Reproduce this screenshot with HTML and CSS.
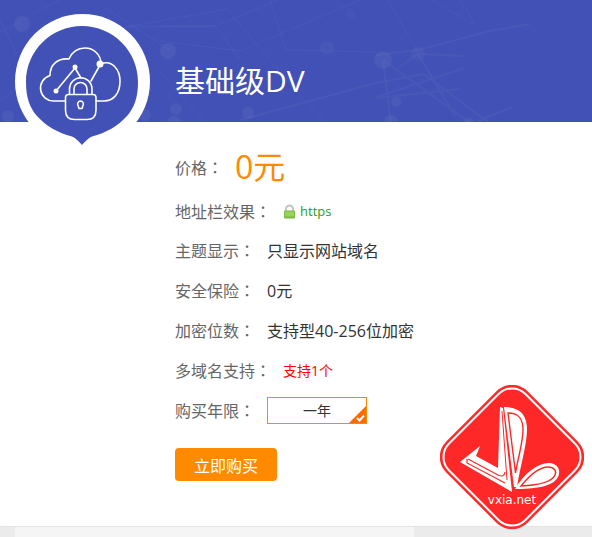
FILE: index.html
```
<!doctype html>
<html lang="zh-CN">
<head>
  <meta charset="utf-8">
  <meta name="viewport" content="width=device-width, initial-scale=1">
  <title>基础级DV</title>
  <link rel="stylesheet" href="styles.css">
</head>
<body>

  <header class="banner">
    <svg class="banner-net" width="592" height="122" viewBox="0 0 592 122" aria-hidden="true">
      <g fill="none" stroke="#fff" stroke-opacity=".04">
        <path d="M0 32L60 0M105 8L170 50M120 28L227 9L285 78L325 122M160 26L216 26L290 -5M125 27L216 26L240 60M160 41L240 51L360 0M270 0L286 50L376 52M0 100L60 60M0 20L50 122M160 72L205 122M388 0L418 52M432 0L475 25M460 0L475 24"/>
        <path d="M376 55L418 50L490 31L530 24M418 54L465 56M376 83L424 74L488 122M376 97L465 68M376 98L460 89M418 54L398 68M418 54L455 116M383 60L469 122M383 60L391 122M476 122L512 107M240 120L376 83" stroke-width="2"/>
      </g>
      <g fill="#fff" fill-opacity=".05">
        <circle cx="22" cy="24" r="8"/>
        <circle cx="168" cy="51" r="8"/>
        <circle cx="8" cy="116" r="6"/>
        <circle cx="145" cy="115" r="6"/>
        <circle cx="176" cy="109" r="6"/>
        <circle cx="174" cy="123" r="7"/>
        <circle cx="248" cy="113" r="6"/>
        <circle cx="327" cy="48" r="7" fill-opacity=".03"/>
        <circle cx="351" cy="14" r="5" fill-opacity=".02"/>
        <circle cx="383" cy="60" r="9"/>
        <circle cx="418" cy="54" r="7" fill-opacity=".03"/>
        <circle cx="396" cy="102" r="5"/>
        <circle cx="391" cy="122" r="7"/>
        <circle cx="469" cy="124" r="6"/>
      </g>
    </svg>
    <svg class="badge" width="135" height="135" viewBox="0 0 135 135" aria-hidden="true">
      <circle cx="67.5" cy="67.5" r="67.5" fill="#fff"/>
      <path d="M67 12C98 12 123 37 123 68C123 84 119 94 112 102C103 112 91 119 77 122.500C73 124 70 128 67 131C64 128 61 124 57 122.500C43 119 31 112 22 102C15 94 11 84 11 68C11 37 36 12 67 12Z" fill="#4251b5"/>
      <g fill="none" stroke="#fff" stroke-width="1.600" stroke-linejoin="round" stroke-linecap="round">
        <path d="M50 87H39A13 13 0 0 1 35 61.500C35 50 43 44 54 45C57 38 63 34 70 34C78 34 86 40 86 50C97 45 105 56 105 67C105 80 98 87 89 87H81"/>
        <path d="M41 77L60 54L66 64M76 67L85 51"/>
        <path d="M54.500 80V75A11 11 0 0 1 77 75V80M59 80V75A6.500 6.500 0 0 1 72 75V80"/>
        <path d="M53.500 80.500H78Q81 80.500 81 83.500V96Q81 105.500 72 105.500H59.500Q50.500 105.500 50.500 96V83.500Q50.500 80.500 53.500 80.500Z"/>
        <path d="M65.500 87A3 3 0 0 1 68 91.500L67 94.500H64L63 91.500A3 3 0 0 1 65.500 87Z" stroke-width="1.500"/>
      </g>
      <g fill="#fff">
        <circle cx="41" cy="77" r="2.500"/>
        <circle cx="60" cy="53" r="2.500"/>
        <circle cx="85" cy="50" r="3.500"/>
      </g>
    </svg>
    <h1 class="title">基础级DV</h1>
  </header>

  <main class="detail">
    <dl class="specs">
      <div class="row row-price">
        <dt>价格<span class="colon" lang="zh-TW">：</span></dt>
        <dd class="price">0元</dd>
      </div>
      <div class="row row-bar">
        <dt>地址栏效果<span class="colon" lang="zh-TW">：</span></dt>
        <dd class="https">
          <svg width="13" height="15" viewBox="0 0 13 15" aria-hidden="true">
            <path d="M3 8V5A3.500 3.500 0 0 1 10 5V8" fill="none" stroke="#c4c4c4" stroke-width="2"/>
            <rect x="1" y="6.500" width="11" height="8" rx="1" fill="#7cb845"/>
            <rect x="2" y="7.500" width="9" height="5" fill="#97d457"/>
          </svg>
          <span>https</span>
        </dd>
      </div>
      <div class="row">
        <dt>主题显示<span class="colon" lang="zh-TW">：</span></dt>
        <dd>只显示网站域名</dd>
      </div>
      <div class="row">
        <dt>安全保险<span class="colon" lang="zh-TW">：</span></dt>
        <dd>0元</dd>
      </div>
      <div class="row">
        <dt>加密位数<span class="colon" lang="zh-TW">：</span></dt>
        <dd>支持型40-256位加密</dd>
      </div>
      <div class="row">
        <dt>多域名支持<span class="colon" lang="zh-TW">：</span></dt>
        <dd class="red">支持1个</dd>
      </div>
      <div class="row">
        <dt>购买年限<span class="colon" lang="zh-TW">：</span></dt>
        <dd>
          <label class="year">
            <input type="radio" name="year" value="1" checked>
            <span>一年</span>
            <svg class="tick" width="17" height="17" viewBox="0 0 17 17" aria-hidden="true">
              <path d="M17 0V17H0Z" fill="#ff6a00"/>
              <path d="M8 12L10.500 14.500L15 9.500" fill="none" stroke="#fff" stroke-width="2"/>
            </svg>
          </label>
        </dd>
      </div>
    </dl>
    <button type="button" class="buy">立即购买</button>
  </main>

  <div class="tabs">
    <div class="tabs-inner"></div>
  </div>

  <svg class="stamp" width="144" height="144" viewBox="0 0 144 144" role="img" aria-label="vxia.net">
    <g transform="rotate(45 72 72)">
      <rect x="14.500" y="14.500" width="115" height="115" rx="22" fill="#ff2828"/>
      <rect x="18" y="18" width="108" height="108" rx="19" fill="none" stroke="#fff" stroke-width="2"/>
    </g>
    <path d="M60 22L63 23L72 107L20 77L40 61L36 71L58 83Z" fill="#fff"/>
    <path d="M62 26L67 95" fill="none" stroke="#ff2828"/>
    <path d="M28 74L58 90Q64 93 65 87M65 98L27 78V74" fill="none" stroke="#ff2828" stroke-width="1.200"/>
    <path d="M64 22C80 22 87 30 87 44C87 60 80 82 77 102H74Z" fill="#fff"/>
    <path d="M68 28C79 28 83 34 83 45C83 58 78 72 75.500 88Z" fill="#fff" stroke="#ff2828" stroke-width="1.400"/>
    <path d="M75 104C83 90 97 78 109 78C116 78 120 83 119 89C117 99 103 104 75 104Z" fill="#fff"/>
    <path d="M81 101C89 91 99 82 108 82C114 82 117 86 115 90C112 97 101 100 81 101Z" fill="#fff" stroke="#ff2828" stroke-width="1.400"/>
    <text class="stamp-text" x="72" y="119" text-anchor="middle">vxia.net</text>
  </svg>

</body>
</html>
```
FILE: styles.css
```
* {
  box-sizing: border-box;
}
body {
  margin: 0;
  background: #fff;
  color: #333;
  font-family: "Open Sans", "Noto Sans CJK SC", sans-serif;
  font-size: 16px;
}

/* banner */
.banner {
  position: relative;
  display: flex;
  gap: 25px;
  height: 122px;
  padding: 14px 15px 0;
  background: #4251b5;
}
.banner-net {
  position: absolute;
  top: 0;
  left: 0;
}
.badge {
  position: relative;
  flex: none;
}
.title {
  position: relative;
  margin: 0;
  padding-top: 43px;
  color: #fff;
  font-size: 30px;
  font-weight: 400;
  line-height: 48px;
}

/* details */
.detail {
  padding: 20px 15px 45px 175px;
}
.specs {
  margin: 0 0 18px;
}
.row {
  display: flex;
  align-items: center;
  gap: 12px;
  height: 40px;
}
.row-price {
  height: 50px;
}
.row-bar {
  height: 38px;
}
.row dt {
  color: #666;
}
.row dd {
  margin: 0;
}
.colon {
  font-family: "Noto Sans CJK TC", sans-serif;
}
.row .price {
  color: #ff8a00;
  font-size: 32px;
  font-weight: 400;
  line-height: 48px;
}
.https {
  display: flex;
  align-items: center;
  gap: 4px;
  color: #24a024;
  font-size: 13px;
}
.row .red {
  color: #f00;
  font-size: 14px;
}
.year {
  position: relative;
  display: flex;
  align-items: center;
  justify-content: center;
  width: 100px;
  height: 27px;
  border: 1px solid #ff8a00;
  font-size: 14px;
  cursor: pointer;
}
.year input {
  position: absolute;
  margin: 0;
  opacity: 0;
}
.tick {
  position: absolute;
  right: 0;
  bottom: 0;
}
.buy {
  display: block;
  height: 33px;
  padding: 0 19px;
  border: 0;
  border-radius: 4px;
  background: #ff8a00;
  color: #fff;
  font-family: inherit;
  font-size: 16px;
  cursor: pointer;
}

/* tab bar */
.tabs {
  padding: 0 30% 0 15px;
  border-top: 1px solid #e4e4e4;
  background: #ebebeb;
}
.tabs-inner {
  height: 10px;
  background: #f5f5f5;
}

.stamp {
  position: absolute;
  top: 385px;
  right: 8px;
}
.stamp-text {
  fill: #fff;
  font-family: "DejaVu Sans", sans-serif;
  font-size: 12px;
}
```
